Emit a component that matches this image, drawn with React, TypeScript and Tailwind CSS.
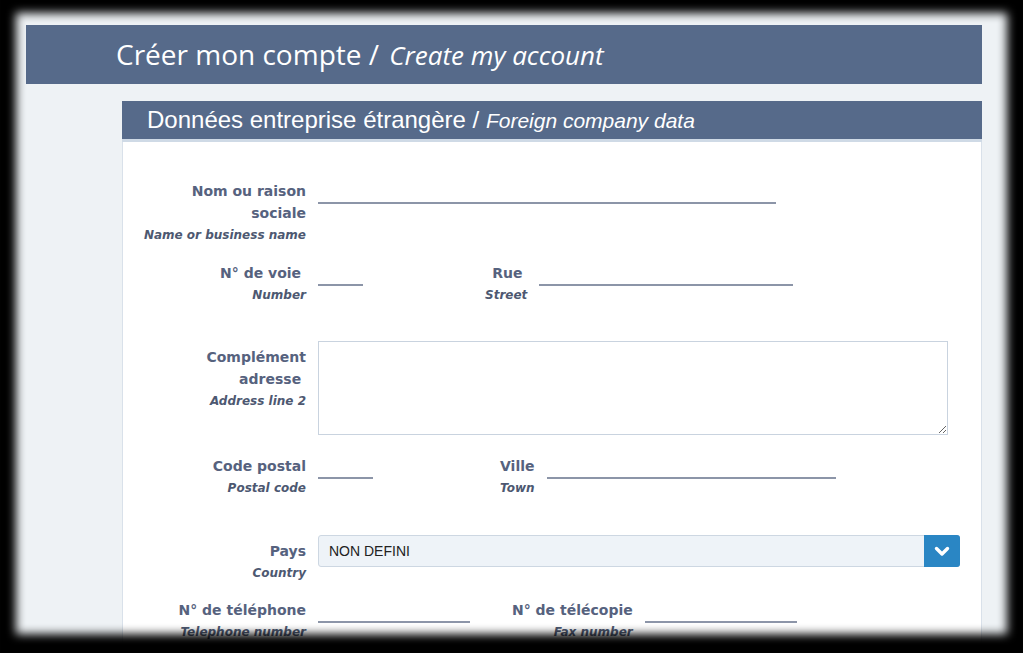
import React from "react";

const label = "text-[#56627e] font-bold text-[14px] leading-[22px]";
const sub = "text-[#4d5871] font-bold italic text-[12px] leading-[22px]";
const font = { fontFamily: '"DejaVu Sans", Verdana, sans-serif' };
const line = "h-[24px] border-b-2 border-[#8c95a8]";

function Label({ lines, subText, pt = "", extra = "" }: { lines: string[]; subText: string; pt?: string; extra?: string }) {
  return (
    <div className={`text-right ${pt} ${extra}`} style={font}>
      {lines.map((l, i) => (
        <div key={i} className={label}>
          {l}
        </div>
      ))}
      <div className={sub}>{subText}</div>
    </div>
  );
}

export default function App() {
  return (
    <div className="relative w-[1023px] h-[653px] overflow-hidden bg-[#eef2f5]">
      <div className="flex flex-col pt-[25px]">
        {/* Top header */}
        <div className="ml-[26px] w-[956px] h-[59px] bg-[#566a8a] flex items-center pl-[90px] pb-[2px]">
          <span className="text-white text-[28px] whitespace-nowrap" style={{ fontFamily: '"Open Sans", sans-serif' }}>
            Créer mon compte /{" "}
            <span className="italic text-[26px] ml-[3px]">Create my account</span>
          </span>
        </div>

        {/* Section */}
        <div className="ml-[122px] mt-[17px] w-[860px] flex flex-col">
          <div className="h-[41px] bg-[#566a8a] border-b-[3px] border-[#cfdae6] flex items-center pl-[25px]">
            <span className="text-white text-[24px] whitespace-nowrap" style={{ fontFamily: '"Liberation Sans", Arial, sans-serif' }}>
              Données entreprise étrangère /{" "}
              <span className="italic text-[21px]">Foreign company data</span>
            </span>
          </div>

          <div className="bg-white border-x border-[#d9e1ea] h-[600px] pl-[19px] pt-[38px] flex flex-col">
            {/* Row 1 */}
            <div className="flex items-start">
              <Label extra="w-[164px]" lines={["Nom ou raison", "sociale"]} subText="Name or business name" />
              <div className={`ml-[12px] w-[458px] ${line}`} />
            </div>

            {/* Row 2 */}
            <div className="flex items-start mt-[16px]">
              <Label extra="w-[164px]" lines={["N° de voie\u00a0"]} subText="Number" />
              <div className={`ml-[12px] w-[45px] ${line}`} />
              <Label extra="ml-[122px]" lines={["Rue\u00a0"]} subText="Street" />
              <div className={`ml-[12px] w-[254px] ${line}`} />
            </div>

            {/* Row 3 */}
            <div className="flex items-start mt-[35px]">
              <Label extra="w-[164px]" pt="pt-[5px]" lines={["Complément", "adresse\u00a0"]} subText="Address line 2" />
              <textarea className="ml-[12px] w-[630px] h-[94px] border border-[#c9d3df] bg-white resize-y outline-none" />
            </div>

            {/* Row 4 */}
            <div className="flex items-start mt-[20px]">
              <Label extra="w-[164px]" lines={["Code postal"]} subText="Postal code" />
              <div className={`ml-[12px] w-[55px] ${line}`} />
              <Label extra="ml-[127px]" lines={["Ville"]} subText="Town" />
              <div className={`ml-[12px] w-[289px] ${line}`} />
            </div>

            {/* Row 5 */}
            <div className="flex items-start mt-[36px]">
              <Label extra="w-[164px]" pt="pt-[5px]" lines={["Pays"]} subText="Country" />
              <div className="ml-[12px] w-[642px] h-[32px] flex rounded-[3px] border border-[#cdd7e2] bg-[#eef3f8]">
                <div
                  className="flex-1 flex items-center pl-[10px] text-[14px] text-[#222]"
                  style={{ fontFamily: '"Liberation Sans", Arial, sans-serif' }}
                >
                  NON DEFINI
                </div>
                <div className="w-[36px] -my-px -mr-px bg-[#2a86c4] rounded-r-[3px] flex items-center justify-center">
                  <svg width="16" height="12" viewBox="0 0 16 12">
                    <path d="M2.5 3.5 L8 9 L13.5 3.5" fill="none" stroke="white" strokeWidth="3.4" strokeLinecap="round" strokeLinejoin="round" />
                  </svg>
                </div>
              </div>
            </div>

            {/* Row 6 */}
            <div className="flex items-start mt-[15px]">
              <Label extra="w-[164px]" lines={["N° de téléphone"]} subText="Telephone number" />
              <div className={`ml-[12px] w-[152px] ${line}`} />
              <Label extra="ml-[42px]" lines={["N° de télécopie"]} subText="Fax number" />
              <div className={`ml-[12px] w-[152px] ${line}`} />
            </div>
          </div>
        </div>
      </div>

      {/* vignette frame overlay */}
      <div className="pointer-events-none absolute inset-0 shadow-[inset_0_-3px_10px_16px_#000]" />
    </div>
  );
}
